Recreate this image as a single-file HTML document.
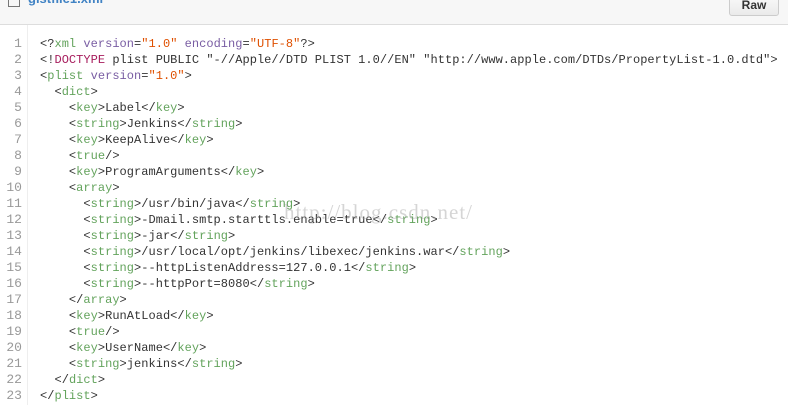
<!DOCTYPE html>
<html><head><style>
body{margin:0;width:788px;height:405px;background:#fff;overflow:hidden;position:relative;font-family:"Liberation Mono",monospace;}
.hdr{position:absolute;left:0;top:0;width:788px;height:24px;background:#f7f7f7;border-bottom:1px solid #ddd;}
.fn{position:absolute;left:28px;top:-9px;font:bold 13px "Liberation Sans",sans-serif;color:#4183c4;}
.ico{position:absolute;left:8px;top:-6px;width:10px;height:11px;border:1px solid #777;}
.raw{position:absolute;left:729px;top:-6px;width:48px;height:20px;border:1px solid #ccc;border-radius:3px;background:linear-gradient(#fafafa,#eaeaea);font:bold 12px "Liberation Sans",sans-serif;color:#333;text-align:center;line-height:20px;}
.gut{position:absolute;left:27px;top:25px;width:1px;height:380px;background:#eee;}
.code{position:absolute;left:0;top:36px;font-size:12px;letter-spacing:0.03px;color:#333;}
.l{height:16px;line-height:16px;white-space:pre;position:relative;}
.n{position:absolute;left:0;width:22px;text-align:right;color:#999;font-size:13px;}
.c{position:absolute;left:40px;}
.t{color:#63a35c}.a{color:#795da3}.s{color:#df5000}.d{color:#a71d5d}
.wm{position:absolute;left:284px;top:200px;font:21px "Liberation Serif",serif;color:rgba(150,150,150,0.4);letter-spacing:1px;}
</style></head><body>
<div class="hdr"><div class="ico"></div><div class="fn">gistfile1.xml</div><div class="raw">Raw</div></div>
<div class="gut"></div>
<div class="code">
<div class="l"><span class="n">1</span><span class="c">&lt;?<span class="t">xml</span> <span class="a">version</span>=<span class="s">"1.0"</span> <span class="a">encoding</span>=<span class="s">"UTF-8"</span>?&gt;</span></div>
<div class="l"><span class="n">2</span><span class="c">&lt;!<span class="d">DOCTYPE</span> plist PUBLIC "-//Apple//DTD PLIST 1.0//EN" "http://www.apple.com/DTDs/PropertyList-1.0.dtd"&gt;</span></div>
<div class="l"><span class="n">3</span><span class="c">&lt;<span class="t">plist</span> <span class="a">version</span>=<span class="s">"1.0"</span>&gt;</span></div>
<div class="l"><span class="n">4</span><span class="c">  &lt;<span class="t">dict</span>&gt;</span></div>
<div class="l"><span class="n">5</span><span class="c">    &lt;<span class="t">key</span>&gt;Label&lt;/<span class="t">key</span>&gt;</span></div>
<div class="l"><span class="n">6</span><span class="c">    &lt;<span class="t">string</span>&gt;Jenkins&lt;/<span class="t">string</span>&gt;</span></div>
<div class="l"><span class="n">7</span><span class="c">    &lt;<span class="t">key</span>&gt;KeepAlive&lt;/<span class="t">key</span>&gt;</span></div>
<div class="l"><span class="n">8</span><span class="c">    &lt;<span class="t">true</span>/&gt;</span></div>
<div class="l"><span class="n">9</span><span class="c">    &lt;<span class="t">key</span>&gt;ProgramArguments&lt;/<span class="t">key</span>&gt;</span></div>
<div class="l"><span class="n">10</span><span class="c">    &lt;<span class="t">array</span>&gt;</span></div>
<div class="l"><span class="n">11</span><span class="c">      &lt;<span class="t">string</span>&gt;/usr/bin/java&lt;/<span class="t">string</span>&gt;</span></div>
<div class="l"><span class="n">12</span><span class="c">      &lt;<span class="t">string</span>&gt;-Dmail.smtp.starttls.enable=true&lt;/<span class="t">string</span>&gt;</span></div>
<div class="l"><span class="n">13</span><span class="c">      &lt;<span class="t">string</span>&gt;-jar&lt;/<span class="t">string</span>&gt;</span></div>
<div class="l"><span class="n">14</span><span class="c">      &lt;<span class="t">string</span>&gt;/usr/local/opt/jenkins/libexec/jenkins.war&lt;/<span class="t">string</span>&gt;</span></div>
<div class="l"><span class="n">15</span><span class="c">      &lt;<span class="t">string</span>&gt;--httpListenAddress=127.0.0.1&lt;/<span class="t">string</span>&gt;</span></div>
<div class="l"><span class="n">16</span><span class="c">      &lt;<span class="t">string</span>&gt;--httpPort=8080&lt;/<span class="t">string</span>&gt;</span></div>
<div class="l"><span class="n">17</span><span class="c">    &lt;/<span class="t">array</span>&gt;</span></div>
<div class="l"><span class="n">18</span><span class="c">    &lt;<span class="t">key</span>&gt;RunAtLoad&lt;/<span class="t">key</span>&gt;</span></div>
<div class="l"><span class="n">19</span><span class="c">    &lt;<span class="t">true</span>/&gt;</span></div>
<div class="l"><span class="n">20</span><span class="c">    &lt;<span class="t">key</span>&gt;UserName&lt;/<span class="t">key</span>&gt;</span></div>
<div class="l"><span class="n">21</span><span class="c">    &lt;<span class="t">string</span>&gt;jenkins&lt;/<span class="t">string</span>&gt;</span></div>
<div class="l"><span class="n">22</span><span class="c">  &lt;/<span class="t">dict</span>&gt;</span></div>
<div class="l"><span class="n">23</span><span class="c">&lt;/<span class="t">plist</span>&gt;</span></div>
</div>
<div class="wm">http://blog.csdn.net/</div>
</body></html>
